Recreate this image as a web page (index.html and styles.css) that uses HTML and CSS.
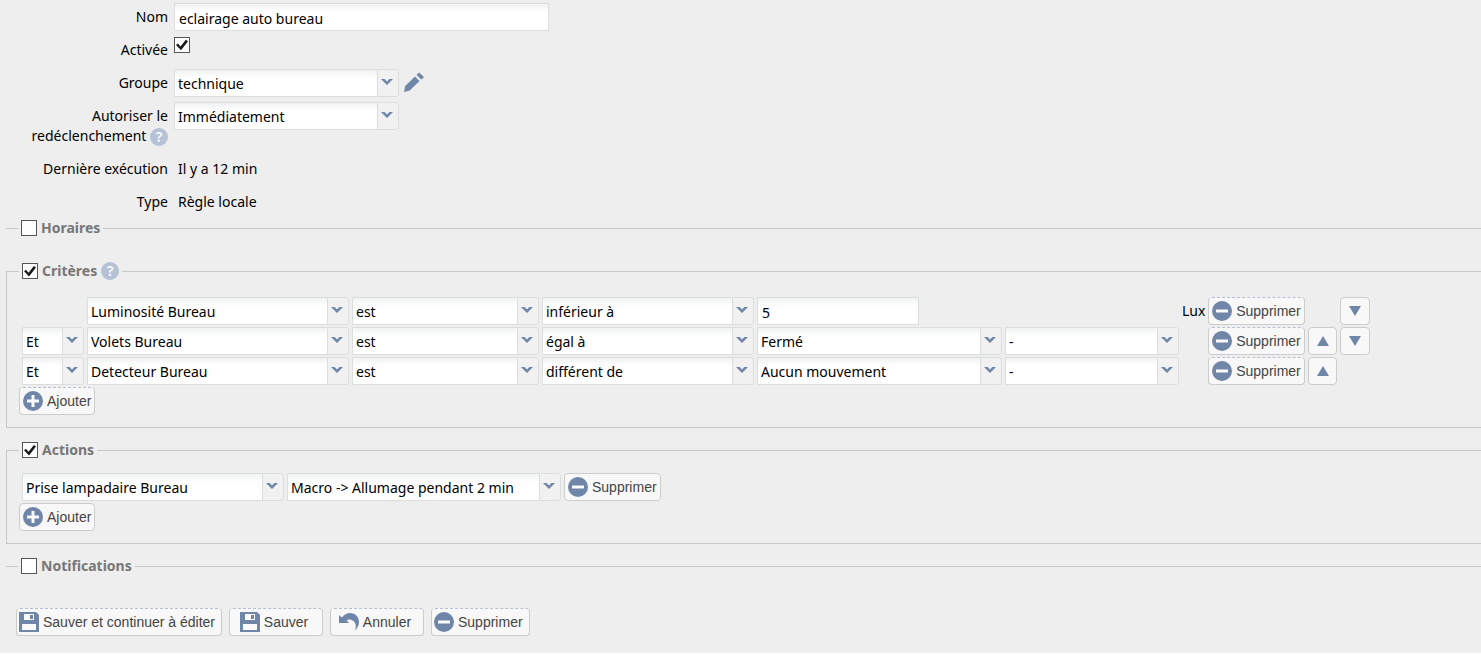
FILE: index.html
```html
<!DOCTYPE html>
<html lang="fr">
<head>
  <meta charset="UTF-8" />
  <title>Règle - eclairage auto bureau</title>
  <meta name="viewport" content="width=device-width, initial-scale=1.0">
  <link rel="stylesheet" href="styles.css">
</head>
<body>

  <!-- shared icons -->
  <svg class="sprite" aria-hidden="true">
    <symbol id="i-arrow" viewBox="0 0 12 8"><path d="M0 1h3.6L6 3.4 8.4 1H12L6 7z" /></symbol>
    <symbol id="i-minus" viewBox="0 0 20 20"><circle cx="10" cy="10" r="10" /><path class="light" d="M4 8.5h12v3H4z" /></symbol>
    <symbol id="i-plus" viewBox="0 0 20 20"><circle cx="10" cy="10" r="10" /><path class="light" d="M8.500 4h3v4.500h4.500v3h-4.500v4.500h-3v-4.500H4v-3h4.500z" /></symbol>
    <symbol id="i-save" viewBox="0 0 20 20"><path d="M0 0h17l3 3v17H0z" /><path class="light" d="M5 2h10v6H5zM3 12h14v6H3z" /><path d="M11 3h3v4h-3z" /></symbol>
    <symbol id="i-undo" viewBox="0 0 20 20"><path d="M0 3l3 2.500C5 2.500 8 1 11 1c5.500 0 9 4 9 9 0 3-1.500 6-4 8.500 1-3 1.200-5.500 0-7.500-1.500-3-5-4.500-8.500-3L10 11H0z" /></symbol>
    <symbol id="i-up" viewBox="0 0 12 10"><path d="M6 0l6 10H0z" /></symbol>
    <symbol id="i-down" viewBox="0 0 12 10"><path d="M0 0h12L6 10z" /></symbol>
    <symbol id="i-edit" viewBox="0 0 20 20"><path d="M0 20l1.200-6L11 4.500l4.500 4.500L5.800 18.500zM12.500 3L15 .5 20 5l-2.500 2.500z" /></symbol>
  </svg>

  <form>
    <div class="props">
      <label class="name" for="nom">Nom</label>
      <div class="value"><input class="text wide" type="text" id="nom" value="eclairage auto bureau"></div>

      <label class="name" for="activee">Activée</label>
      <div class="value"><input class="check" type="checkbox" id="activee" checked></div>

      <label class="name" for="groupe">Groupe</label>
      <div class="value">
        <span class="combo medium"><select id="groupe"><option>technique</option></select><svg><use href="#i-arrow" /></svg></span>
        <button class="edit" type="button" aria-label="Modifier le groupe"><svg class="icon"><use href="#i-edit" /></svg></button>
      </div>

      <label class="name" for="autoriser">Autoriser le redéclenchement <span class="help">?</span></label>
      <div class="value">
        <span class="combo medium"><select id="autoriser"><option>Immédiatement</option></select><svg><use href="#i-arrow" /></svg></span>
      </div>

      <span class="name">Dernière exécution</span>
      <span class="info">Il y a 12 min</span>

      <span class="name">Type</span>
      <span class="info">Règle locale</span>
    </div>

    <fieldset class="closed">
      <legend><label><input class="check" type="checkbox">Horaires</label></legend>
    </fieldset>

    <fieldset>
      <legend><label><input class="check" type="checkbox" checked>Critères</label><span class="help">?</span></legend>
      <div class="criteria">
        <div class="criterion">
          <span></span>
          <span class="combo"><select aria-label="Capteur"><option>Luminosité Bureau</option></select><svg><use href="#i-arrow" /></svg></span>
          <span class="combo"><select aria-label="Verbe"><option>est</option></select><svg><use href="#i-arrow" /></svg></span>
          <span class="combo"><select aria-label="Comparaison"><option>inférieur à</option></select><svg><use href="#i-arrow" /></svg></span>
          <input class="text number" type="text" aria-label="Valeur" value="5">
          <span></span>
          <span>Lux</span>
          <button class="btn dashed" type="button"><svg class="icon"><use href="#i-minus" /></svg>Supprimer</button>
          <span></span>
          <button class="btn move" type="button" aria-label="Descendre"><svg><use href="#i-down" /></svg></button>
        </div>
        <div class="criterion">
          <span class="combo"><select aria-label="Opérateur"><option>Et</option></select><svg><use href="#i-arrow" /></svg></span>
          <span class="combo"><select aria-label="Capteur"><option>Volets Bureau</option></select><svg><use href="#i-arrow" /></svg></span>
          <span class="combo"><select aria-label="Verbe"><option>est</option></select><svg><use href="#i-arrow" /></svg></span>
          <span class="combo"><select aria-label="Comparaison"><option>égal à</option></select><svg><use href="#i-arrow" /></svg></span>
          <span class="combo"><select aria-label="Valeur"><option>Fermé</option></select><svg><use href="#i-arrow" /></svg></span>
          <span class="combo"><select aria-label="Durée"><option>-</option></select><svg><use href="#i-arrow" /></svg></span>
          <span></span>
          <button class="btn dashed" type="button"><svg class="icon"><use href="#i-minus" /></svg>Supprimer</button>
          <button class="btn move" type="button" aria-label="Monter"><svg><use href="#i-up" /></svg></button>
          <button class="btn move" type="button" aria-label="Descendre"><svg><use href="#i-down" /></svg></button>
        </div>
        <div class="criterion">
          <span class="combo"><select aria-label="Opérateur"><option>Et</option></select><svg><use href="#i-arrow" /></svg></span>
          <span class="combo"><select aria-label="Capteur"><option>Detecteur Bureau</option></select><svg><use href="#i-arrow" /></svg></span>
          <span class="combo"><select aria-label="Verbe"><option>est</option></select><svg><use href="#i-arrow" /></svg></span>
          <span class="combo"><select aria-label="Comparaison"><option>différent de</option></select><svg><use href="#i-arrow" /></svg></span>
          <span class="combo"><select aria-label="Valeur"><option>Aucun mouvement</option></select><svg><use href="#i-arrow" /></svg></span>
          <span class="combo"><select aria-label="Durée"><option>-</option></select><svg><use href="#i-arrow" /></svg></span>
          <span></span>
          <button class="btn dashed" type="button"><svg class="icon"><use href="#i-minus" /></svg>Supprimer</button>
          <button class="btn move" type="button" aria-label="Monter"><svg><use href="#i-up" /></svg></button>
        </div>
      </div>
      <button class="btn dashed" type="button"><svg class="icon"><use href="#i-plus" /></svg>Ajouter</button>
    </fieldset>

    <fieldset>
      <legend><label><input class="check" type="checkbox" checked>Actions</label></legend>
      <div class="action">
        <span class="combo"><select aria-label="Équipement"><option>Prise lampadaire Bureau</option></select><svg><use href="#i-arrow" /></svg></span>
        <span class="combo"><select aria-label="Commande"><option>Macro -&gt; Allumage pendant 2 min</option></select><svg><use href="#i-arrow" /></svg></span>
        <button class="btn" type="button"><svg class="icon"><use href="#i-minus" /></svg>Supprimer</button>
      </div>
      <button class="btn" type="button"><svg class="icon"><use href="#i-plus" /></svg>Ajouter</button>
    </fieldset>

    <fieldset class="closed">
      <legend><label><input class="check" type="checkbox">Notifications</label></legend>
    </fieldset>

    <div class="buttons">
      <button class="btn dashed" type="button"><svg class="icon"><use href="#i-save" /></svg>Sauver et continuer à éditer</button>
      <button class="btn dashed" type="button"><svg class="icon"><use href="#i-save" /></svg>Sauver</button>
      <button class="btn dashed" type="button"><svg class="icon"><use href="#i-undo" /></svg>Annuler</button>
      <button class="btn dashed" type="button"><svg class="icon"><use href="#i-minus" /></svg>Supprimer</button>
    </div>
  </form>

</body>
</html>
```
FILE: styles.css
```css
* {
  box-sizing: border-box;
}

html {
  background: #fff;
}

body {
  margin: 0;
  background: #eee;
  color: #000;
  font: 14px/20px "Noto Sans", Tahoma, sans-serif;
  overflow-x: hidden;
}

svg {
  fill: #6f86a8;
  flex: none;
}

.sprite {
  display: none;
}

.light {
  fill: #fafafa;
}

.icon {
  width: 20px;
  height: 20px;
}

/* properties */
.props {
  display: grid;
  grid-template-columns: 168px 1fr;
  column-gap: 6px;
}

.name {
  padding: 7px 0 6px 24px;
  text-align: right;
}

.value {
  display: flex;
  align-items: flex-start;
  gap: 5px;
  padding-top: 3px;
}

.info {
  padding: 7px 4px 6px;
}

.help {
  display: inline-block;
  width: 18px;
  height: 18px;
  border-radius: 50%;
  background: #b5c1d5;
  color: #f4f6f9;
  font: bold 14px/18px "Noto Sans", Tahoma, sans-serif;
  text-align: center;
  vertical-align: middle;
}

/* fields */
.text,
.combo select {
  height: 28px;
  margin: 0;
  padding: 3px 4px 0;
  border: 1px solid #dcdede;
  border-radius: 0;
  background: linear-gradient(#f0f3f3, #fff 8px);
  color: #000;
  font: inherit;
}

.wide {
  width: 375px;
}

.number {
  width: 162px;
}

.combo {
  position: relative;
  display: flex;
}

.combo select {
  flex: 1;
  min-width: 0;
  padding: 2px 3px 0;
  appearance: none;
  border-radius: 0 3px 3px 0;
  background:
    linear-gradient(#dcdede, #dcdede) right 20px top / 1px 100% no-repeat,
    linear-gradient(#f1f1f1, #f1f1f1) right / 20px 100% no-repeat,
    linear-gradient(#f0f3f3, #fff 8px);
}

.combo svg {
  position: absolute;
  top: 9px;
  right: 6px;
  width: 12px;
  height: 8px;
  pointer-events: none;
}

.medium {
  width: 225px;
}

.check {
  appearance: none;
  display: grid;
  place-items: center;
  width: 16px;
  height: 16px;
  margin: 1px 0;
  border: 1px solid #555;
  background: #fff;
}

.check:checked::before {
  content: "";
  width: 12px;
  height: 12px;
  background: #1a1a1a;
  clip-path: polygon(0 50%, 16% 38%, 38% 62%, 82% 6%, 100% 18%, 42% 94%);
}

.edit {
  padding: 0;
  margin-top: 3px;
  border: 0;
  background: none;
  line-height: 0;
}

/* sections */
fieldset {
  min-width: 0;
  margin: 0 0 12px 6px;
  padding: 13px 0 12px 12px;
  border: 1px solid #c8c8c8;
  border-right: 0;
}

fieldset.closed {
  padding: 0 0 11px 12px;
  border-width: 1px 0 0;
}

legend {
  display: flex;
  align-items: center;
  gap: 4px;
  padding: 0 3px;
  color: #777;
  font-weight: bold;
}

legend label {
  display: flex;
  align-items: center;
  gap: 4px;
}

.criteria {
  padding-top: 3px;
}

.criterion {
  display: grid;
  grid-template-columns: 62px 262px 187px 212px 245px 174px 23px 97px 29px 30px;
  column-gap: 3px;
  align-items: center;
  margin: 0 0 2px 3px;
}

.action {
  display: grid;
  grid-template-columns: 262px 274px auto;
  justify-content: start;
  column-gap: 3px;
  margin: 0 0 2px 3px;
}

/* buttons */
.btn {
  display: flex;
  align-items: center;
  justify-content: center;
  gap: 4px;
  height: 28px;
  padding: 0 3px;
  border: 1px solid #ccc;
  border-radius: 4px;
  background: #f8f8f8;
  color: #444;
  font: 14px "Liberation Sans", Arial, sans-serif;
  white-space: nowrap;
}

.dashed {
  border-top: 1px dashed #b4bfd0;
}

.move svg {
  width: 12px;
  height: 10px;
}

.buttons {
  display: flex;
  gap: 7px;
  padding: 9px 16px 17px;
}

.buttons .btn {
  min-width: 94px;
  padding: 0 6px 0 2px;
}
```
